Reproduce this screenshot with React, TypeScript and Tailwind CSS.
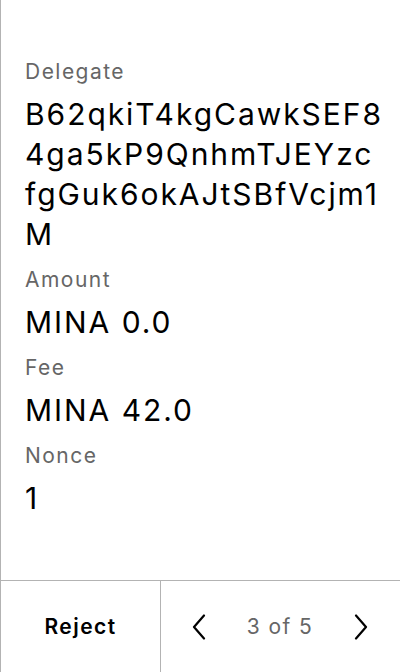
import React from "react";

type Field = {
  label: string;
  lines: string[];
};

// address is wrapped where the device screen wraps it
const fields: Field[] = [
  {
    label: "Delegate",
    lines: ["B62qkiT4kgCawkSEF8", "4ga5kP9QnhmTJEYzc", "fgGuk6okAJtSBfVcjm1", "M"],
  },
  { label: "Amount", lines: ["MINA 0.0"] },
  { label: "Fee", lines: ["MINA 42.0"] },
  { label: "Nonce", lines: ["1"] },
];

const Chevron = ({ dir }: { dir: "left" | "right" }) => (
  <svg width="14" height="26" viewBox="0 0 14 26" fill="none">
    <path
      d={dir === "left" ? "M12 1.5L2 13l10 11.5" : "M2 1.5L12 13 2 24.5"}
      stroke="#000"
      strokeWidth="2.2"
      strokeLinecap="round"
      strokeLinejoin="round"
    />
  </svg>
);

const App = () => {
  return (
    <div
      className="w-[400px] h-[672px] flex flex-col bg-white border-l border-[#b3b3b3] text-black"
      style={{ fontFamily: "Inter, 'Noto Sans', sans-serif" }}
    >
      {/* details */}
      <div className="flex-1 flex flex-col gap-[11px] pl-6 pr-2 pt-[57px]">
        {fields.map((f) => (
          <div key={f.label} className="flex flex-col">
            <p className="text-[21px] leading-[30px] tracking-[0.07em] text-[#666666] mb-[7px]">
              {f.label}
            </p>
            {f.lines.map((l) => (
              <p key={l} className="text-[30px] leading-[40px] tracking-[0.065em] whitespace-nowrap">
                {l}
              </p>
            ))}
          </div>
        ))}
      </div>

      {/* footer */}
      <div className="h-[92px] flex border-t border-[#b3b3b3]">
        <button className="w-[160px] flex items-center justify-center text-[21px] tracking-[0.07em] font-semibold border-r border-[#b3b3b3]">
          Reject
        </button>
        <div className="flex-1 flex items-center justify-between pl-[31px] pr-[32px]">
          <Chevron dir="left" />
          <span className="text-[21px] tracking-[0.07em] text-[#666666]">3 of 5</span>
          <Chevron dir="right" />
        </div>
      </div>
    </div>
  );
};

export default App;
